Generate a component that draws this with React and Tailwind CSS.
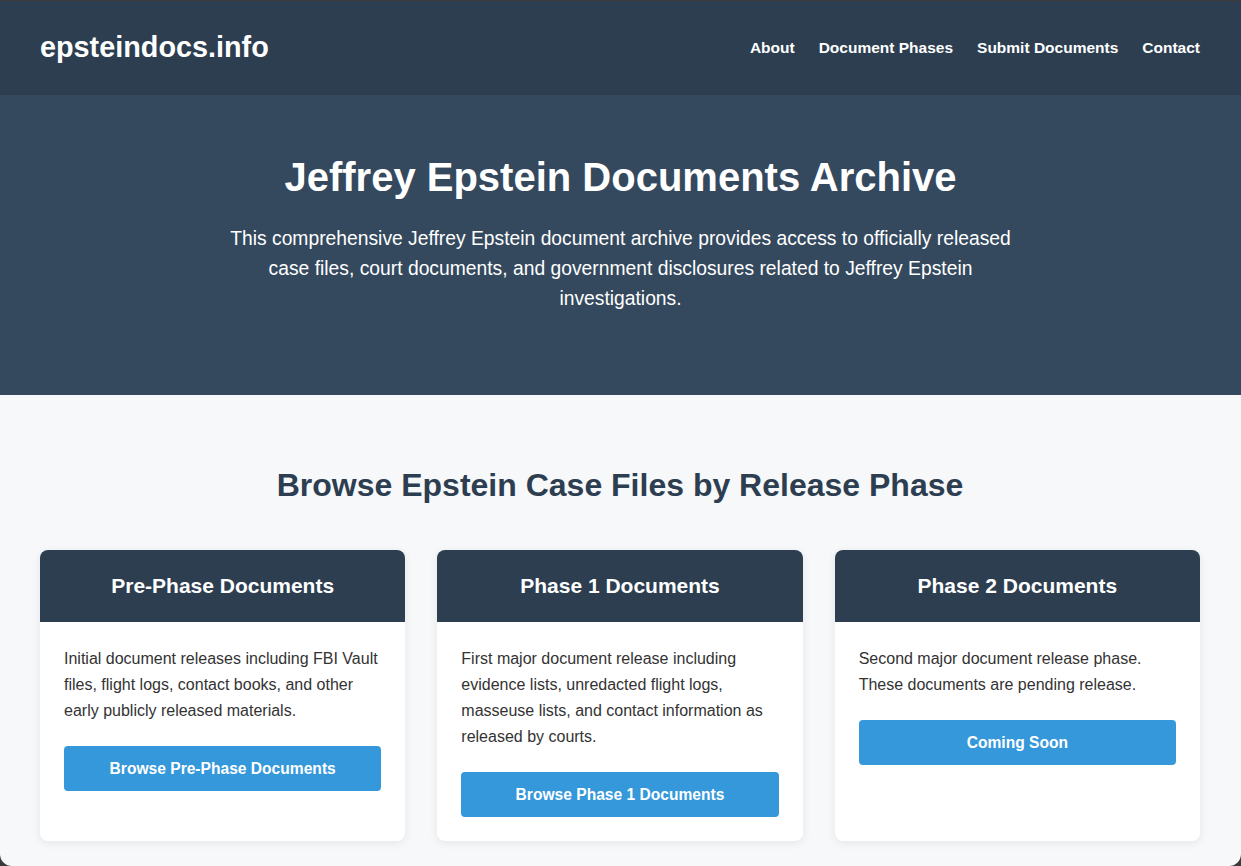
export default function App() {
  const phases = [
    {
      title: "Pre-Phase Documents",
      text: "Initial document releases including FBI Vault files, flight logs, contact books, and other early publicly released materials.",
      button: "Browse Pre-Phase Documents",
    },
    {
      title: "Phase 1 Documents",
      text: "First major document release including evidence lists, unredacted flight logs, masseuse lists, and contact information as released by courts.",
      button: "Browse Phase 1 Documents",
    },
    {
      title: "Phase 2 Documents",
      text: "Second major document release phase. These documents are pending release.",
      button: "Coming Soon",
    },
  ];

  return (
    <div
      className="h-[866px] bg-[#3a3a3a] pt-px"
      style={{ fontFamily: '"Liberation Sans", Arial, sans-serif' }}
    >
      <div className="h-full overflow-hidden rounded-b-[12px] bg-[#f7f8fa]">
        {/* Header */}
        <header className="flex h-[94px] items-center justify-between bg-[#2c3e50] pl-10 pr-[41px] text-white">
          <div className="text-[28.8px] font-bold">epsteindocs.info</div>
          <nav className="flex gap-6 text-[15.5px] font-bold">
            <a href="#">About</a>
            <a href="#">Document Phases</a>
            <a href="#">Submit Documents</a>
            <a href="#">Contact</a>
          </nav>
        </header>

        {/* Hero */}
        <section className="bg-[#34495e] px-10 pt-[58px] pb-[81px] text-center text-white">
          <h1 className="mb-[23px] text-[40px] leading-[48px] font-bold">
            Jeffrey Epstein Documents Archive
          </h1>
          <p className="mx-auto max-w-[800px] text-[19.3px] leading-[30px]">
            This comprehensive Jeffrey Epstein document archive provides access
            to officially released case files, court documents, and government
            disclosures related to Jeffrey Epstein investigations.
          </p>
        </section>

        {/* Phases */}
        <section className="pl-10 pr-[41px] pt-[71px]">
          <h2 className="mb-[46px] text-center text-[32px] leading-[38px] font-bold text-[#2c3e50]">
            Browse Epstein Case Files by Release Phase
          </h2>
          <div className="grid grid-cols-3 gap-8">
            {phases.map((p) => (
              <div
                key={p.title}
                className="overflow-hidden rounded-lg bg-white shadow-[0_2px_10px_rgba(0,0,0,0.08)]"
              >
                <div className="flex h-[72px] items-center justify-center bg-[#2c3e50] text-[21px] font-bold text-white">
                  {p.title}
                </div>
                <div className="p-6">
                  <p className="mb-[22px] text-[16px] leading-[26px] text-[#333]">
                    {p.text}
                  </p>
                  <button className="flex h-[45px] w-full items-center justify-center rounded bg-[#3498db] text-[15.6px] font-bold text-white">
                    {p.button}
                  </button>
                </div>
              </div>
            ))}
          </div>
        </section>
      </div>
    </div>
  );
}
